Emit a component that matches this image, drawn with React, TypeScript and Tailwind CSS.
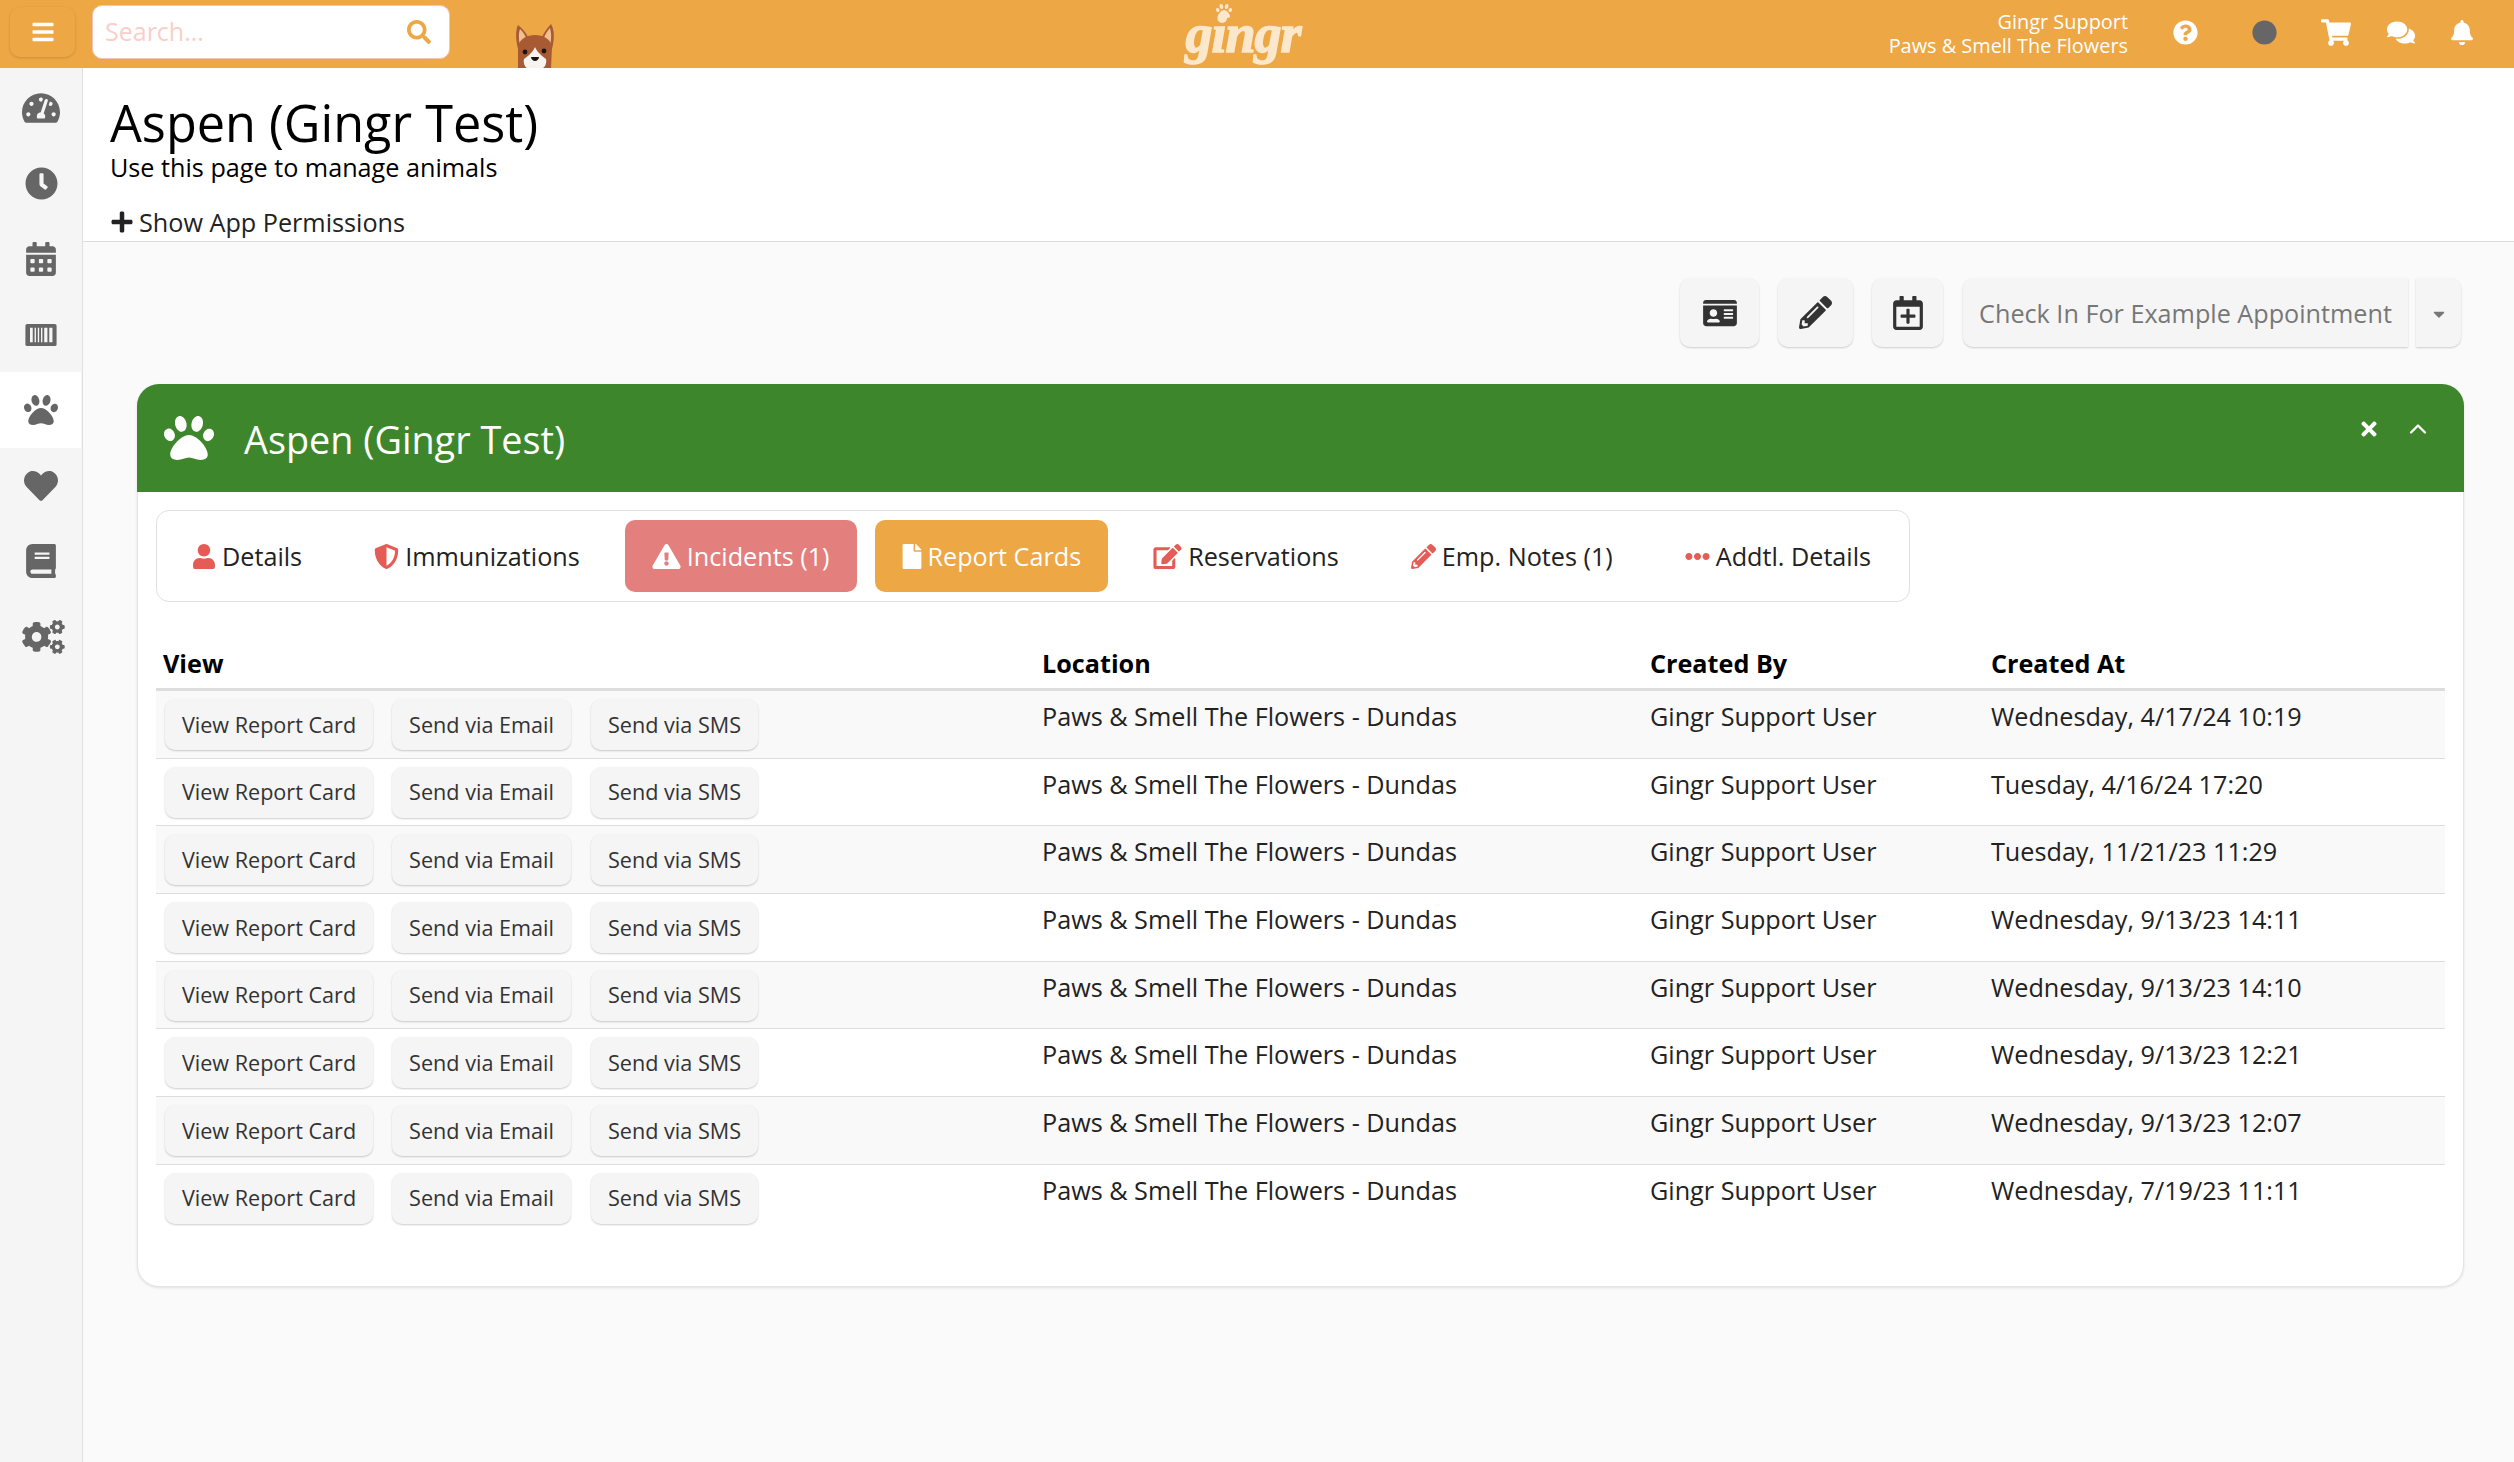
import {
  FaBars, FaSearch, FaQuestionCircle, FaCircle, FaShoppingCart, FaComments, FaBell,
  FaTachometerAlt, FaClock, FaCalendarAlt, FaPaw, FaHeart, FaBook, FaCogs,
  FaPlus, FaIdCard, FaPencilAlt, FaRegCalendarPlus, FaCaretDown, FaTimes,
  FaUser, FaShieldAlt, FaExclamationTriangle, FaFile, FaEdit, FaEllipsisH,
} from "react-icons/fa";
import { ChevronUp } from "lucide-react";

const rows = [
  ["Wednesday, 4/17/24 10:19"],
  ["Tuesday, 4/16/24 17:20"],
  ["Tuesday, 11/21/23 11:29"],
  ["Wednesday, 9/13/23 14:11"],
  ["Wednesday, 9/13/23 14:10"],
  ["Wednesday, 9/13/23 12:21"],
  ["Wednesday, 9/13/23 12:07"],
  ["Wednesday, 7/19/23 11:11"],
];

function BarcodeCard() {
  return (
    <svg width="32" height="22" viewBox="0 0 34 24">
      <rect width="34" height="24" rx="2" fill="#666666" />
      <path d="M5 4h3v16H5zM10 4h1.500v16H10zM13.500 4H15v16h-1.500zM17 4h1.500v16H17zM20.500 4h3.500v16h-3.500zM26 4h3.500v16H26z" fill="#f5f5f5" />
    </svg>
  );
}

function Dog() {
  return (
    <svg width="40" height="45" viewBox="0 0 40 45">
      <path d="M3 26 C0 14 1 6 3 2 C8 6 11 10 13 14 L8 32 Z" fill="#a65a35" />
      <path d="M5 22 C3 14 4 9 5 6 C8 9 10 12 11 15 L7 26 Z" fill="#f0c08f" />
      <path d="M37 26 C40 14 39 6 36 1 C32 5 29 10 27 14 L32 32 Z" fill="#a65a35" />
      <path d="M35 22 C37 14 36 9 35 5 C32 8 30 12 29 15 L33 26 Z" fill="#f0c08f" />
      <path d="M3 45 L3 24 C4 16 12 12 20 12 C28 12 36 16 37 24 L36 45 Z" fill="#a85a32" />
      <path d="M20 24 C18 28 17 30 9 36 C8 40 10 44 12 45 L28 45 C30 44 32 40 31 36 C23 30 22 28 20 24 Z" fill="#f7f3ee" />
      <circle cx="10" cy="29" r="2.400" fill="#1d1512" />
      <circle cx="29" cy="28" r="2.400" fill="#1d1512" />
      <path d="M16 34 L24 34 C24 36 22 38 20 38 C18 38 16 36 16 34 Z" fill="#1d1512" />
    </svg>
  );
}

function Logo() {
  return (
    <div className="relative ml-[628px] h-[68px] w-[120px] shrink-0 self-start text-center">
      <FaPaw className="absolute left-[33px] top-[3px] h-[16px] w-[16px] text-[#fbe7cb]" />
      <span className="block pt-[8px] font-['Liberation_Serif'] text-[54px] font-bold italic leading-[52px] tracking-[-1px] text-[#fbe7cb] [-webkit-text-stroke:1.5px_#fbe7cb]">
        gingr
      </span>
    </div>
  );
}

function TopBar() {
  return (
    <header className="flex h-[68px] items-center bg-[#eda745] pb-[4px] text-white">
      <button className="ml-[10px] flex h-[50px] w-[65px] shrink-0 items-center justify-center rounded-[10px] shadow-[0_1px_3px_rgba(0,0,0,0.15)]">
        <FaBars className="h-[24px] w-[24px]" />
      </button>
      <div className="ml-[17px] flex h-[54px] w-[358px] shrink-0 items-center justify-between rounded-[10px] border border-[#f4c3b5] bg-white pl-[12px] pr-[18px]">
        <span className="text-[25px] text-[#f8cfc9]">Search...</span>
        <FaSearch className="h-[24px] w-[24px] text-[#eda745]" />
      </div>
      <div className="-mb-[4px] ml-[65px] shrink-0 self-end leading-[0]">
        <Dog />
      </div>
      <Logo />
      <div className="ml-auto mt-[4px] text-right text-[19.9px] leading-[24px]">
        <div>Gingr Support</div>
        <div>Paws &amp; Smell The Flowers</div>
      </div>
      <div className="ml-[45px] flex items-center">
        <FaQuestionCircle className="h-[25px] w-[25px]" />
        <FaCircle className="ml-[54px] h-[25px] w-[25px] text-[#666666]" />
        <FaShoppingCart className="ml-[44px] h-[27px] w-[30px]" />
        <FaComments className="ml-[35px] h-[25px] w-[30px]" />
        <FaBell className="ml-[35px] mr-[41px] h-[25px] w-[22px]" />
      </div>
    </header>
  );
}

function Sidebar() {
  const icon = "text-[#666666]";
  const items = [
    <FaTachometerAlt className={`h-[38px] w-[38px] ${icon}`} />,
    <FaClock className={`h-[33px] w-[33px] ${icon}`} />,
    <FaCalendarAlt className={`h-[34px] w-[30px] ${icon}`} />,
    <BarcodeCard />,
    <FaPaw className={`h-[34px] w-[34px] ${icon}`} />,
    <FaHeart className={`h-[34px] w-[34px] ${icon}`} />,
    <FaBook className={`h-[34px] w-[30px] ${icon}`} />,
    <FaCogs className={`ml-[4px] h-[34px] w-[43px] ${icon}`} />,
  ];
  return (
    <aside className="w-[83px] shrink-0 border-r border-[#e0e0e0] bg-[#f5f5f5] pt-[2px]">
      {items.map((it, i) => (
        <div
          key={i}
          className={
            i === 4
              ? "mr-[1px] flex h-[75.6px] items-center justify-center bg-white"
              : "flex h-[75.6px] items-center justify-center"
          }
        >
          {it}
        </div>
      ))}
    </aside>
  );
}

function ActionButton({ className, children }: { className: string; children: React.ReactNode }) {
  return (
    <button className={`flex h-[69px] items-center justify-center rounded-[10px] bg-[#f5f5f5] shadow-[0_1px_2px_rgba(0,0,0,0.18)] ${className}`}>
      {children}
    </button>
  );
}

function Tab({
  icon,
  label,
  active,
}: {
  icon: React.ReactNode;
  label: string;
  active?: string;
}) {
  return (
    <div className={`flex h-[72px] shrink-0 items-center gap-[6px] whitespace-nowrap rounded-[10px] px-[27px] text-[25.2px] ${active ?? "text-[#222222]"}`}>
      {icon}
      <span className="pt-[2px]">{label}</span>
    </div>
  );
}

function RowButton({ label, className }: { label: string; className: string }) {
  return (
    <button className={`h-[51px] rounded-[10px] bg-[#f5f5f5] text-center text-[21.6px] text-[#333333] shadow-[0_1px_2px_rgba(0,0,0,0.2)] ${className}`}>
      {label}
    </button>
  );
}

export default function App() {
  const red = "text-[#e55b55]";
  return (
    <div className="flex min-h-[1462px] flex-col bg-[#fafafa] font-['Open_Sans',sans-serif] text-black">
      <TopBar />
      <div className="flex flex-1">
        <Sidebar />
        <main className="min-w-0 flex-1">
          <section className="h-[174px] border-b border-[#dddddd] bg-white pl-[27px] pt-[27px]">
            <h1 className="text-[50.4px] leading-[56px]">Aspen (Gingr Test)</h1>
            <p className="text-[25.2px] leading-[32px]">Use this page to manage animals</p>
            <div className="mt-[23px] flex items-center gap-[5px] text-[25.2px] leading-[32px] text-[#222222]">
              <FaPlus className="h-[24px] w-[24px]" />
              Show App Permissions
            </div>
          </section>

          <div className="mr-[53px] mt-[36px] flex justify-end">
            <ActionButton className="w-[79px]">
              <FaIdCard className="h-[30px] w-[38px] text-[#333333]" />
            </ActionButton>
            <ActionButton className="ml-[19px] w-[75px]">
              <FaPencilAlt className="h-[33px] w-[33px] text-[#333333]" />
            </ActionButton>
            <ActionButton className="ml-[19px] w-[71px]">
              <FaRegCalendarPlus className="h-[34px] w-[30px] text-[#333333]" />
            </ActionButton>
            <ActionButton className="ml-[20px] w-[445px] rounded-r-none">
              <span className="pt-[3px] text-[25.2px] text-[#777777]">Check In For Example Appointment</span>
            </ActionButton>
            <ActionButton className="ml-[8px] w-[45px] rounded-l-none">
              <FaCaretDown className="mt-[3px] h-[18px] w-[18px] text-[#777777]" />
            </ActionButton>
          </div>

          <div className="ml-[54px] mr-[50px] mt-[37px] rounded-[22px] border border-[#e4e4e4] bg-white pb-[53px] shadow-[0_1px_3px_rgba(0,0,0,0.1)]">
            <div className="-m-px flex h-[108px] items-center rounded-t-[22px] bg-[#3e862b] pl-[27px] pr-[32px] text-white">
              <FaPaw className="h-[50px] w-[50px]" />
              <span className="ml-[30px] pt-[4px] text-[37.8px]">Aspen (Gingr Test)</span>
              <div className="ml-auto flex -translate-y-[9px] items-center gap-[24px]">
                <FaTimes className="h-[22px] w-[22px]" />
                <ChevronUp className="h-[28px] w-[28px]" strokeWidth={2} />
              </div>
            </div>

            <div className="ml-[18px] mt-[19px] flex h-[92px] w-[1754px] items-center gap-[18px] rounded-[13px] border border-[#e0e0e0] px-[8px]">
              <Tab icon={<FaUser className={`h-[25px] w-[24px] ${red}`} />} label="Details" />
              <Tab icon={<FaShieldAlt className={`h-[25px] w-[25px] ${red}`} />} label="Immunizations" />
              <Tab
                icon={<FaExclamationTriangle className="h-[25px] w-[29px]" />}
                label="Incidents (1)"
                active="bg-[#e37f7c] text-white"
              />
              <Tab icon={<FaFile className="h-[25px] w-[20px]" />} label="Report Cards" active="bg-[#eda745] text-white" />
              <Tab icon={<FaEdit className={`h-[25px] w-[29px] ${red}`} />} label="Reservations" />
              <Tab icon={<FaPencilAlt className={`h-[25px] w-[25px] ${red}`} />} label="Emp. Notes (1)" />
              <Tab icon={<FaEllipsisH className={`h-[25px] w-[25px] ${red}`} />} label="Addtl. Details" />
            </div>

            <table className="ml-[18px] mt-[28px] w-[2289px] table-fixed border-separate border-spacing-0 text-[25.2px] leading-[32px]">
              <colgroup>
                <col className="w-[880px]" />
                <col className="w-[608px]" />
                <col className="w-[341px]" />
                <col className="w-[460px]" />
              </colgroup>
              <thead>
                <tr>
                  <th className="h-[61px] border-b-[3px] border-[#dddddd] pb-[9px] pl-[7px] pr-[6px] align-bottom text-left font-bold">View</th>
                  <th className="border-b-[3px] border-[#dddddd] px-[6px] pb-[9px] align-bottom text-left font-bold">Location</th>
                  <th className="border-b-[3px] border-[#dddddd] px-[6px] pb-[9px] align-bottom text-left font-bold">Created By</th>
                  <th className="border-b-[3px] border-[#dddddd] px-[6px] pb-[9px] align-bottom text-left font-bold">Created At</th>
                </tr>
              </thead>
              <tbody>
                {rows.map(([at], i) => (
                  <tr key={i} className={i % 2 === 0 ? "bg-[#f9f9f9]" : "bg-white"}>
                    <td className={i < 7 ? "h-[67.7px] border-b border-[#dddddd] pl-[9px] pt-[8px] align-top" : "h-[67.7px] pl-[9px] pt-[8px] align-top"}>
                      <div className="flex">
                        <RowButton label="View Report Card" className="w-[208px]" />
                        <RowButton label="Send via Email" className="ml-[19px] w-[179px]" />
                        <RowButton label="Send via SMS" className="ml-[20px] w-[167px]" />
                      </div>
                    </td>
                    <td className={i < 7 ? "border-b border-[#dddddd] px-[6px] pt-[9px] align-top text-[#222222]" : "px-[6px] pt-[9px] align-top text-[#222222]"}>
                      Paws &amp; Smell The Flowers - Dundas
                    </td>
                    <td className={i < 7 ? "border-b border-[#dddddd] px-[6px] pt-[9px] align-top text-[#222222]" : "px-[6px] pt-[9px] align-top text-[#222222]"}>
                      Gingr Support User
                    </td>
                    <td className={i < 7 ? "border-b border-[#dddddd] px-[6px] pt-[9px] align-top text-[#222222]" : "px-[6px] pt-[9px] align-top text-[#222222]"}>
                      {at}
                    </td>
                  </tr>
                ))}
              </tbody>
            </table>
          </div>
        </main>
      </div>
    </div>
  );
}
